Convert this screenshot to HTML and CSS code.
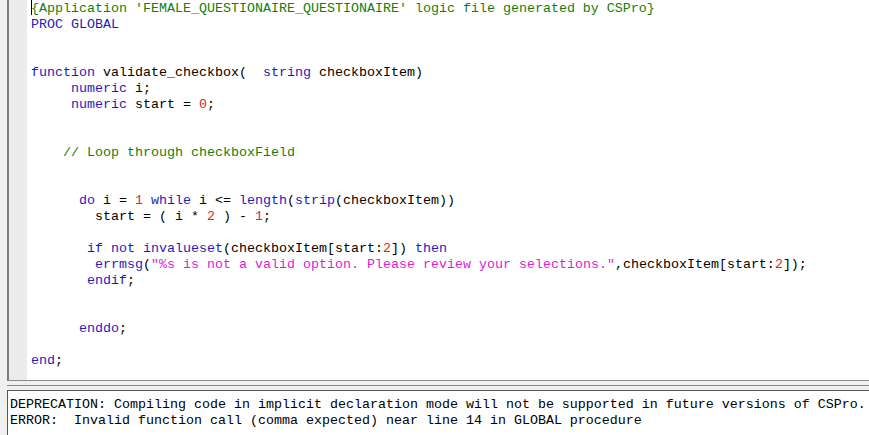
FILE: index.html
```html
<!DOCTYPE html>
<html lang="en">
<head>
    <meta charset="UTF-8">
    <title>CSPro Logic Editor</title>
    <link rel="stylesheet" href="styles.css">
</head>
<body>
    <div class="window">
        <div class="editor">
            <div class="gutter"></div>
<pre class="code"><span class="caret"></span><span class="cm">{Application 'FEMALE_QUESTIONAIRE_QUESTIONAIRE' logic file generated by CSPro}</span>
<span class="kw">PROC GLOBAL</span>


<span class="kw">function</span> validate_checkbox(  <span class="kw">string</span> checkboxItem)
     <span class="kw">numeric</span> i;
     <span class="kw">numeric</span> start = <span class="num">0</span>;


    <span class="cm">// Loop through checkboxField</span>


      <span class="kw">do</span> i = <span class="num">1</span> <span class="kw">while</span> i &lt;= <span class="kw">length</span>(<span class="kw">strip</span>(checkboxItem))
        start = ( i * <span class="num">2</span> ) - <span class="num">1</span>;

       <span class="kw">if not invalueset</span>(checkboxItem[start:<span class="num">2</span>]) <span class="kw">then</span>
        <span class="kw">errmsg</span>(<span class="str">"%s is not a valid option. Please review your selections."</span>,checkboxItem[start:<span class="num">2</span>]);
       <span class="kw">endif</span>;


      <span class="kw">enddo</span>;

<span class="kw">end</span>;</pre>
        </div>
        <div class="splitter"></div>
<pre class="output">DEPRECATION: Compiling code in implicit declaration mode will not be supported in future versions of CSPro.
ERROR:  Invalid function call (comma expected) near line 14 in GLOBAL procedure</pre>
    </div>
</body>
</html>
```

FILE: styles.css
```css
* {
    box-sizing: border-box;
}

body {
    margin: 0;
    padding: 0;
    background: #f0f0f0;
    overflow: hidden;
}

.window {
    display: flex;
    flex-direction: column;
    width: 869px;
    height: 435px;
    padding-left: 7px;
}

.editor {
    display: flex;
    height: 381px;
    border-left: 2px solid #7c7c7c;
    border-bottom: 1px solid #8a8a8a;
}

.gutter {
    width: 18px;
    background: #ececec;
}

.code,
.output {
    margin: 0;
    font-family: "Liberation Mono", "Courier New", monospace;
    font-size: 13.333px;
    line-height: 16px;
    white-space: pre;
    overflow: hidden;
}

.code {
    flex: 1;
    padding-left: 4px;
    background: #fff;
    color: #000;
}

.caret {
    display: inline-block;
    width: 0;
    height: 15px;
    margin-right: -1px;
    border-left: 1px solid #000;
    vertical-align: -3px;
}

.kw {
    color: #1c1cc0;
}

.num {
    color: #e8202a;
}

.str {
    color: #e020d8;
}

.cm {
    color: #108010;
}

.splitter {
    height: 5px;
    border-bottom: 1px solid #8a8a8a;
    margin-bottom: 4px;
}

.output {
    flex: 1;
    padding: 6px 2px 0;
    background: #fff;
    color: #000;
    border-top: 1px solid #555;
    border-left: 1px solid #555;
}
```
